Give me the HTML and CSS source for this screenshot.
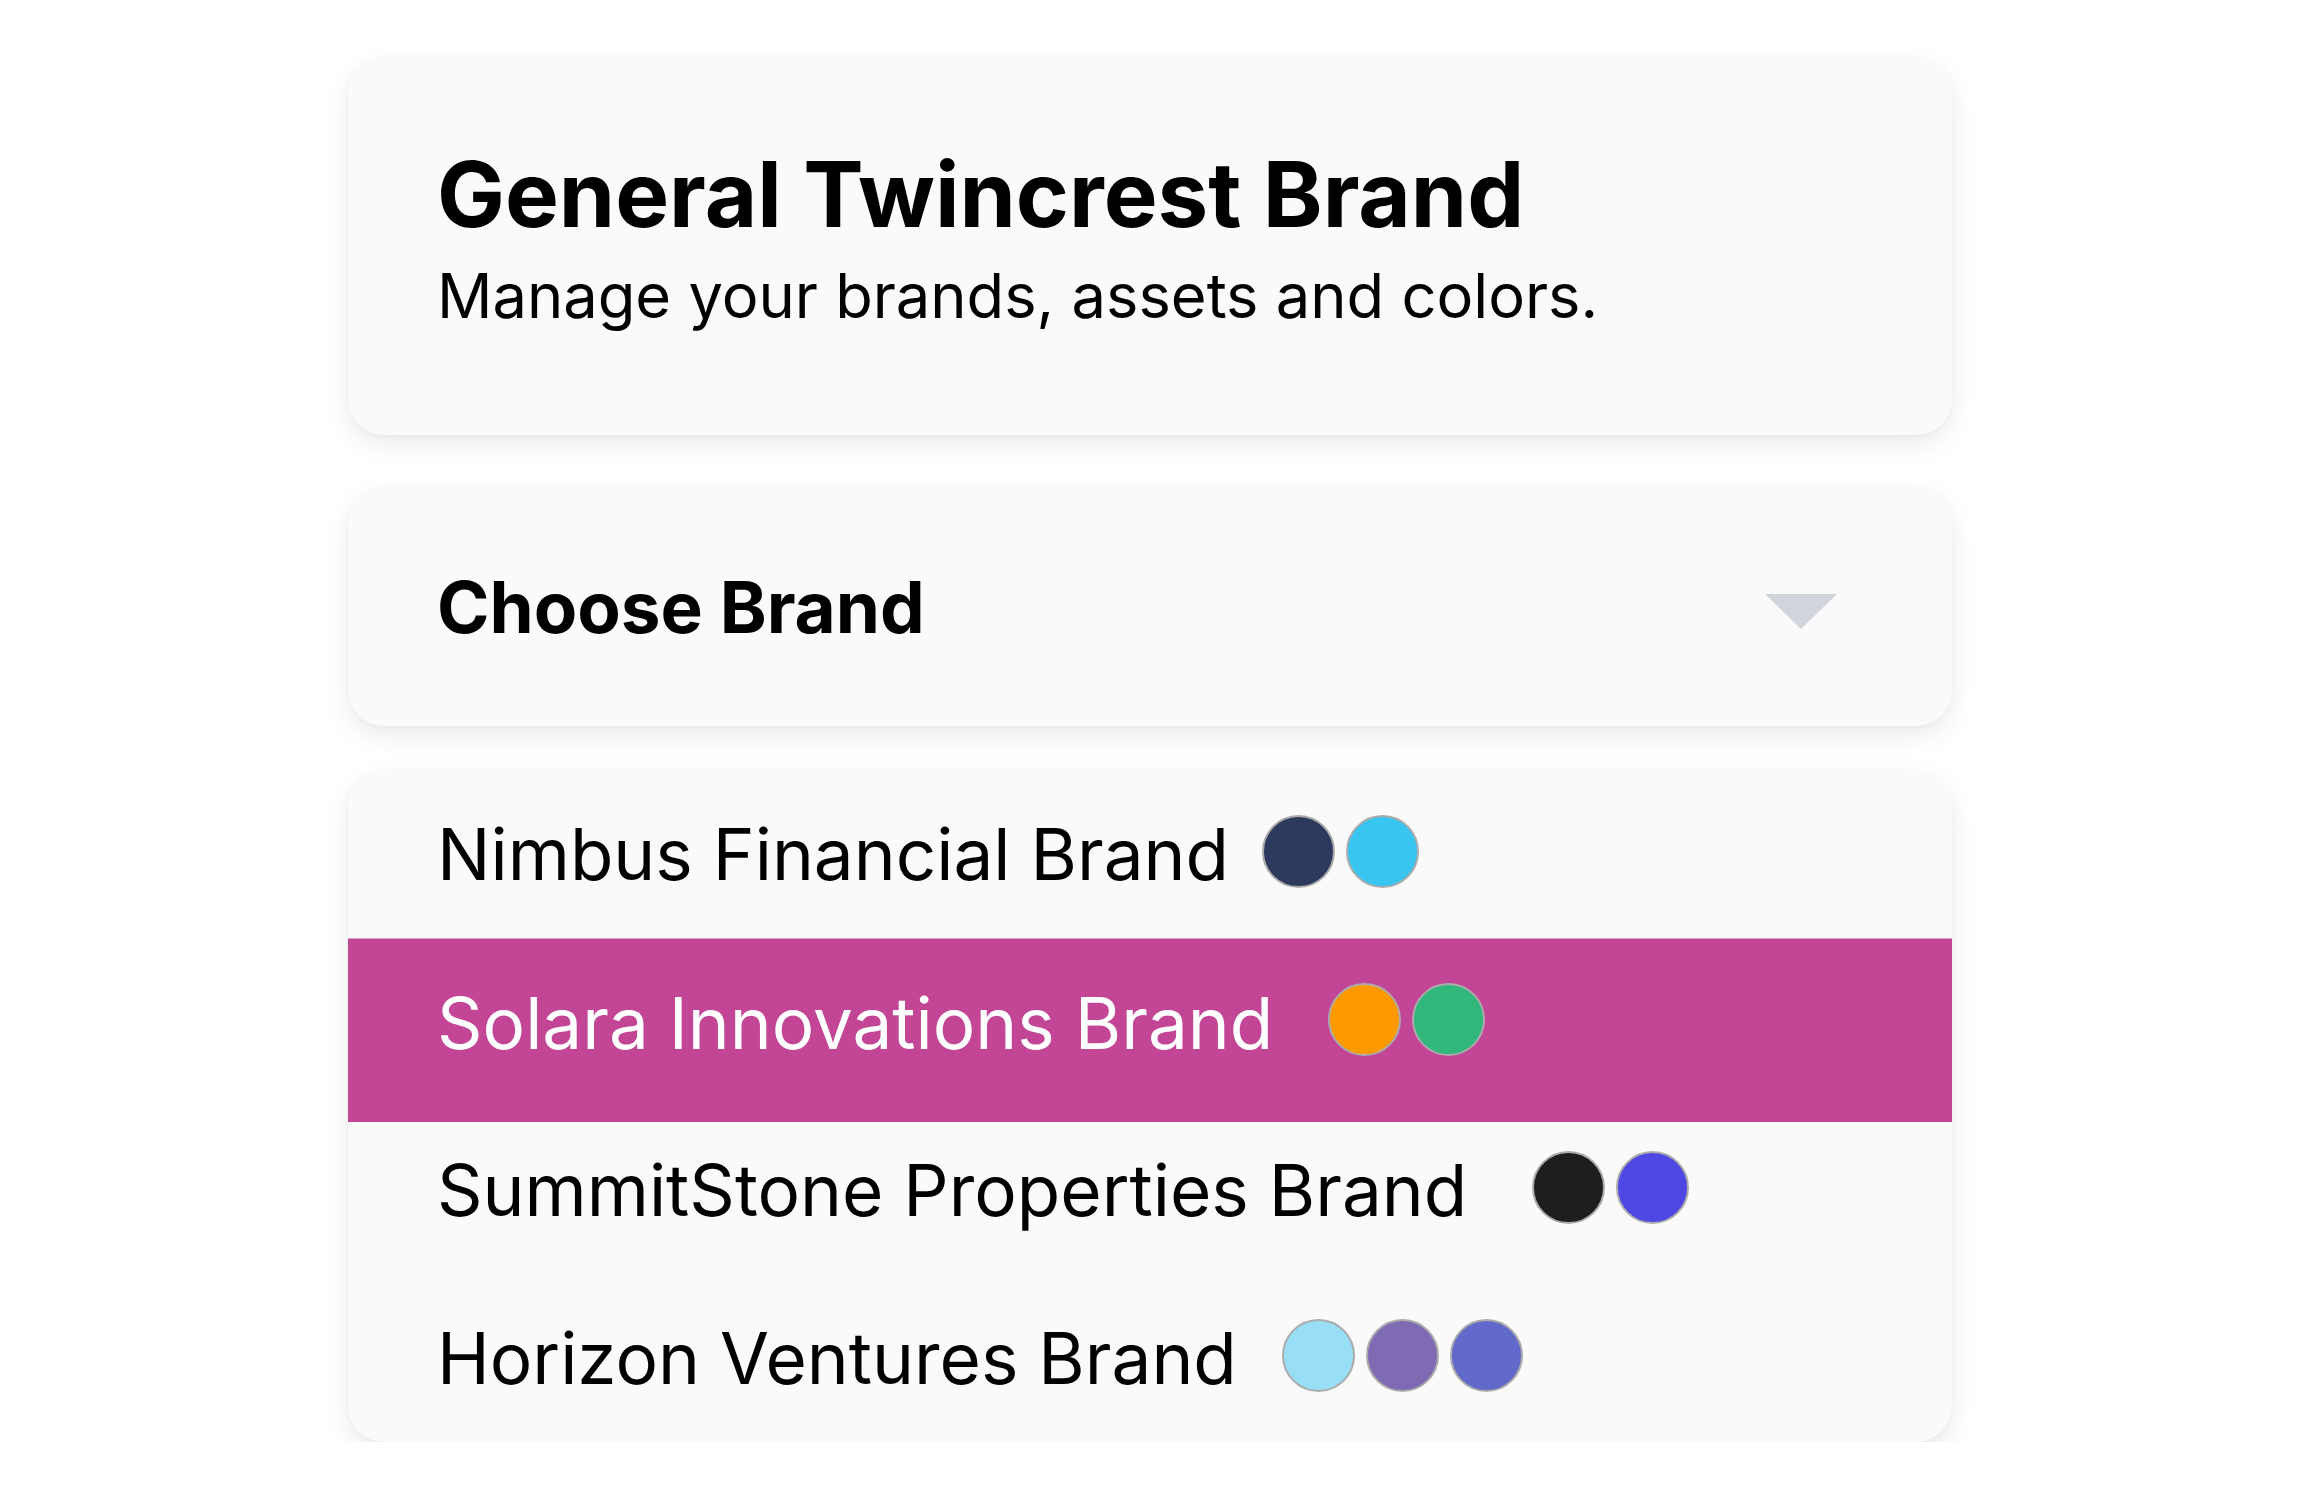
FILE: index.html
```html
<!DOCTYPE html>
<html lang="en">
<head>
  <meta charset="utf-8">
  <title>Brands</title>
  <link rel="stylesheet" href="styles.css">
</head>
<body>
  <div class="page">

    <div class="card header">
      <h1 class="title">General Twincrest Brand</h1>
      <p class="subtitle">Manage your brands, assets and colors.</p>
    </div>

    <div class="card picker">
      <span class="picker-label">Choose Brand</span>
      <span class="caret"></span>
    </div>

    <ul class="card brand-list">
      <li class="brand">
        <span class="brand-name">Nimbus Financial Brand</span>
        <span class="dots gap-31">
          <span class="dot navy"></span>
          <span class="dot sky"></span>
        </span>
      </li>
      <li class="brand active">
        <span class="brand-name">Solara Innovations Brand</span>
        <span class="dots gap-53">
          <span class="dot orange"></span>
          <span class="dot green"></span>
        </span>
      </li>
      <li class="brand">
        <span class="brand-name">SummitStone Properties Brand</span>
        <span class="dots gap-63">
          <span class="dot ink"></span>
          <span class="dot indigo"></span>
        </span>
      </li>
      <li class="brand">
        <span class="brand-name">Horizon Ventures Brand</span>
        <span class="dots gap-43">
          <span class="dot ice"></span>
          <span class="dot lavender"></span>
          <span class="dot periwinkle"></span>
        </span>
      </li>
    </ul>

  </div>
</body>
</html>
```

FILE: styles.css
```css
body {
  margin: 0;
  background: #fff;
  color: #000;
  font-family: Inter, "Noto Sans", sans-serif;
}

.page {
  width: 1604px;
  margin: 0 auto;
  padding-top: 57px;
}

.card {
  background: #fafafa;
  border-radius: 36px;
  box-shadow: 0 10px 26px rgba(0, 0, 0, 0.08), 0 2px 6px rgba(0, 0, 0, 0.03);
}

/* header card */
.header {
  height: 378px;
  box-sizing: border-box;
  padding: 83px 91px 0 89px;
  margin-bottom: 52px;
}
.title {
  margin: 0;
  font-size: 90.5px;
  font-weight: 700;
  line-height: 1.2;
}
.subtitle {
  margin: 11px 0 0;
  font-size: 61.4px;
  line-height: 1.2;
}

/* dropdown */
.picker {
  height: 239px;
  box-sizing: border-box;
  padding: 0 115px 0 89px;
  margin-bottom: 44px;
  display: flex;
  align-items: center;
  justify-content: space-between;
}
.picker-label {
  font-size: 71px;
  font-weight: 700;
}
.caret {
  width: 0;
  height: 0;
  margin-top: 9px;
  border-left: 36.5px solid transparent;
  border-right: 36.5px solid transparent;
  border-top: 35px solid #d1d5db;
}

/* list */
.brand-list {
  list-style: none;
  margin: 0;
  padding: 0;
  overflow: hidden;
}
.brand {
  height: 168px;
  box-sizing: border-box;
  padding-left: 89px;
  display: flex;
  align-items: center;
  font-size: 71px;
}
.brand.active {
  background: #c24596;
  color: #fff;
  border-top: 1px solid #d7a3c7;
  box-shadow: 0 16px 0 #c24596;
}

.dots {
  display: flex;
  gap: 11px;
  margin-bottom: 6px;
}
.gap-31 { margin-left: 33px; }
.gap-43 { margin-left: 45px; }
.gap-53 { margin-left: 55px; }
.gap-63 { margin-left: 65px; }

.dot {
  width: 73px;
  height: 73px;
  box-sizing: border-box;
  border-radius: 50%;
  border: 2px solid #ababab;
}
.navy { background: #2d3a5d; }
.sky { background: #38c6f1; }
.orange { background: #fe9a00; }
.green { background: #31b67c; }
.ink { background: #1e1e1e; }
.indigo { background: #4f47e4; }
.ice { background: #98dff6; }
.lavender { background: #7f6bb4; }
.periwinkle { background: #6169cb; }
```
